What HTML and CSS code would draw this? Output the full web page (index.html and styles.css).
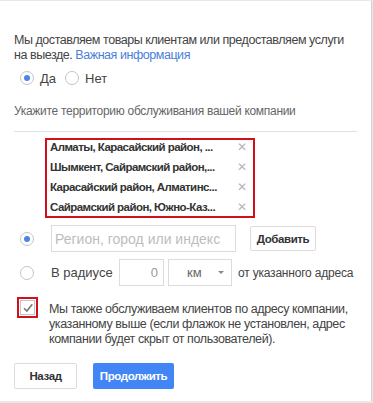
FILE: index.html
```html
<!DOCTYPE html>
<html lang="ru">

<head>
    <meta charset="UTF-8">
    <meta name="viewport" content="width=device-width, initial-scale=1.0">
    <title>Территория обслуживания</title>
    <link rel="stylesheet" href="styles.css">
</head>

<body>
    <div class="dialog">
        <p class="intro">Мы доставляем товары клиентам или предоставляем услуги на выезде. <a href="#">Важная информация</a></p>

        <div class="choice">
            <label class="option"><span class="radio checked"></span>Да</label>
            <label class="option"><span class="radio"></span>Нет</label>
        </div>

        <p class="hint">Укажите территорию обслуживания вашей компании</p>
        <div class="divider"></div>

        <div class="areas">
            <ul class="area-list">
                <li><span class="area-name">Алматы, Карасайский район, ...</span><span class="remove">&#x2715;</span></li>
                <li><span class="area-name">Шымкент, Сайрамский район,...</span><span class="remove">&#x2715;</span></li>
                <li><span class="area-name">Карасайский район, Алматинс...</span><span class="remove">&#x2715;</span></li>
                <li><span class="area-name">Сайрамский район, Южно-Каз...</span><span class="remove">&#x2715;</span></li>
            </ul>
        </div>

        <div class="row">
            <span class="radio checked"></span>
            <input type="text" class="field region" placeholder="Регион, город или индекс">
            <button class="btn add">Добавить</button>
        </div>

        <div class="row">
            <span class="radio"></span>
            <span class="label radius">В радиусе</span>
            <input type="text" class="field distance" value="0">
            <div class="select">км<span class="caret"></span></div>
            <span class="label">от указанного адреса</span>
        </div>

        <div class="check-row">
            <div class="check-mark">
                <span class="checkbox">
                    <svg width="12" height="12" viewBox="0 0 12 12"><path d="M2 6.2 L4.8 9 L10.3 2.2" fill="none" stroke="#777" stroke-width="1.6"/></svg>
                </span>
            </div>
            <p>Мы также обслуживаем клиентов по адресу компании, указанному выше (если флажок не установлен, адрес компании будет скрыт от пользователей).</p>
        </div>

        <div class="actions">
            <button class="btn back">Назад</button>
            <button class="btn primary">Продолжить</button>
        </div>
    </div>
</body>

</html>
```

FILE: styles.css
```css
body {
    margin: 0;
    background-color: #e8e8e8;
    font-family: "Liberation Sans", Arial, sans-serif;
    color: #444;
}

.dialog {
    width: 357px;
    height: 400px;
    margin-top: 1px;
    padding: 0 0 0 14px;
    background: white;
    border-right: 1px solid #d0d0d0;
    box-sizing: content-box;
    overflow: hidden;
}

.intro {
    margin: 32px 0 0;
    width: 345px;
    font-size: 12.5px;
    letter-spacing: -0.45px;
    line-height: 15px;
}

.intro a {
    color: #4a7fd9;
    text-decoration: none;
}

.choice {
    display: flex;
    margin-top: 7px;
    padding-left: 6px;
    height: 16px;
    align-items: center;
}

.option {
    display: flex;
    align-items: center;
    font-size: 13px;
    margin-right: 9px;
}

.option .radio {
    margin-right: 6px;
}

.radio {
    width: 12px;
    height: 12px;
    border: 1px solid #c4c4c4;
    border-radius: 50%;
    box-sizing: content-box;
    position: relative;
    flex-shrink: 0;
}

.radio.checked::after {
    content: "";
    position: absolute;
    left: 3px;
    top: 3px;
    width: 6px;
    height: 6px;
    border-radius: 50%;
    background-color: #4a86e8;
}

.hint {
    margin: 18px 0 0;
    font-size: 12px;
    letter-spacing: -0.3px;
    line-height: 15px;
    color: #666;
}

.divider {
    width: 343px;
    margin-top: 12px;
    border-top: 1px solid #e0e0e0;
}

.areas {
    width: 206px;
    margin: 6px 0 0 31px;
    border: 2px solid #d0101a;
}

.area-list {
    list-style: none;
    margin: -3px 0 -1px;
    padding: 0 0 0 3px;
}

.area-list li {
    display: flex;
    align-items: center;
    height: 20px;
}

.area-name {
    width: 184px;
    font-size: 11.5px;
    font-weight: bold;
    letter-spacing: -0.55px;
    color: #333;
    white-space: nowrap;
    overflow: hidden;
}

.remove {
    margin-left: 3px;
    color: #b5b5b5;
    font-size: 12px;
}

.row {
    display: flex;
    align-items: center;
    margin-top: 7px;
}

.row .radio {
    margin: 0 17px 0 6px;
}

.field {
    height: 27px;
    border: 1px solid #dcdcdc;
    box-sizing: border-box;
    font-family: inherit;
    font-size: 14px;
    outline: none;
}

.region {
    width: 185px;
    padding: 0 3px;
}

.region::placeholder {
    color: #bdbdbd;
}

.distance {
    width: 45px;
    padding: 0 5px;
    text-align: right;
    color: #999;
    font-size: 13px;
}

.label {
    font-size: 12px;
    letter-spacing: -0.2px;
}

.label.radius {
    width: 68px;
    font-size: 13px;
    letter-spacing: 0;
}

.select {
    position: relative;
    width: 64px;
    height: 27px;
    margin: 0 6px 0 4px;
    border: 1px solid #dcdcdc;
    box-sizing: border-box;
    font-size: 13px;
    line-height: 25px;
    color: #666;
    padding-left: 18px;
}

.caret {
    position: absolute;
    right: 7px;
    top: 11px;
    border-left: 3px solid transparent;
    border-right: 3px solid transparent;
    border-top: 3px solid #888;
}

.btn {
    font-family: inherit;
    font-size: 11.5px;
    font-weight: bold;
    letter-spacing: -0.4px;
    border-radius: 2px;
    cursor: pointer;
    padding: 0;
}

.add {
    width: 66px;
    height: 25px;
    margin-left: 14px;
    background: white;
    color: #333;
    border: 1px solid #dcdcdc;
}

.check-row {
    display: flex;
    margin-top: 11px;
}

.check-mark {
    width: 17px;
    height: 17px;
    margin: 0 11px 0 3px;
    border: 2px solid #d0101a;
    display: flex;
    align-items: center;
    justify-content: center;
    flex-shrink: 0;
}

.checkbox {
    width: 13px;
    height: 13px;
    border: 1px solid #c6c6c6;
    display: flex;
    align-items: center;
    justify-content: center;
}

.check-row p {
    margin: 5px 0 0;
    font-size: 12.5px;
    letter-spacing: -0.4px;
    line-height: 15px;
    width: 310px;
}

.actions {
    display: flex;
    margin-top: 16px;
}

.back {
    width: 63px;
    height: 26px;
    background: white;
    color: #333;
    border: 1px solid #dcdcdc;
}

.primary {
    width: 81px;
    height: 26px;
    margin-left: 16px;
    background-color: #4285f4;
    color: white;
    border: none;
}
```
